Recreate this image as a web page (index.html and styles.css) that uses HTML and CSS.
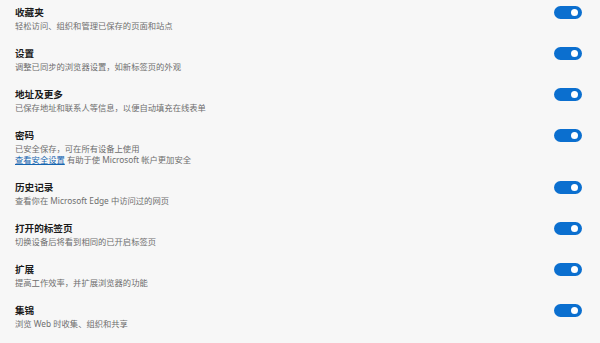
FILE: index.html
```html
<!DOCTYPE html>
<html lang="zh-CN">
<head>
<meta charset="utf-8">
<link rel="stylesheet" href="styles.css">
</head>
<body>
<div class="list">
  <div class="row">
    <div class="text">
      <div class="title">收藏夹</div>
      <div class="desc">轻松访问、组织和管理已保存的页面和站点</div>
    </div>
    <div class="toggle"><span class="knob"></span></div>
  </div>
  <div class="row">
    <div class="text">
      <div class="title">设置</div>
      <div class="desc">调整已同步的浏览器设置，如新标签页的外观</div>
    </div>
    <div class="toggle"><span class="knob"></span></div>
  </div>
  <div class="row">
    <div class="text">
      <div class="title">地址及更多</div>
      <div class="desc">已保存地址和联系人等信息，以便自动填充在线表单</div>
    </div>
    <div class="toggle"><span class="knob"></span></div>
  </div>
  <div class="row">
    <div class="text">
      <div class="title">密码</div>
      <div class="desc">已安全保存，可在所有设备上使用</div>
      <div class="desc"><a class="link" href="#">查看安全设置</a> 有助于使 Microsoft 帐户更加安全</div>
    </div>
    <div class="toggle"><span class="knob"></span></div>
  </div>
  <div class="row">
    <div class="text">
      <div class="title">历史记录</div>
      <div class="desc">查看你在 Microsoft Edge 中访问过的网页</div>
    </div>
    <div class="toggle"><span class="knob"></span></div>
  </div>
  <div class="row">
    <div class="text">
      <div class="title">打开的标签页</div>
      <div class="desc">切换设备后将看到相同的已开启标签页</div>
    </div>
    <div class="toggle"><span class="knob"></span></div>
  </div>
  <div class="row">
    <div class="text">
      <div class="title">扩展</div>
      <div class="desc">提高工作效率，并扩展浏览器的功能</div>
    </div>
    <div class="toggle"><span class="knob"></span></div>
  </div>
  <div class="row">
    <div class="text">
      <div class="title">集锦</div>
      <div class="desc">浏览 Web 时收集、组织和共享</div>
    </div>
    <div class="toggle"><span class="knob"></span></div>
  </div>
</div>
</body>
</html>
```
FILE: styles.css
```css
html, body {
  margin: 0;
  padding: 0;
  background: #f7f7f7;
  height: 100%;
  overflow: hidden;
}
body {
  font-family: "Noto Sans", "Noto Sans CJK SC", sans-serif;
}
.list {
  padding: 5px 18px 0 15px;
  display: flex;
  flex-direction: column;
}
.row {
  display: flex;
  justify-content: space-between;
  align-items: flex-start;
  padding-bottom: 15px;
}
.title {
  font-size: 9.6px;
  line-height: 15px;
  font-weight: 700;
  color: #1b1b1b;
}
.desc {
  font-size: 8.3px;
  line-height: 11px;
  color: #6e6e6e;
}
.link {
  color: #1565b0;
  text-decoration: underline;
  text-underline-offset: 1px;
}
.toggle {
  margin-top: 1px;
  width: 28px;
  height: 13px;
  border-radius: 7px;
  background: #0b6fcf;
  display: flex;
  align-items: center;
  justify-content: flex-end;
  padding-right: 4px;
  box-sizing: border-box;
}
.knob {
  width: 7px;
  height: 7px;
  border-radius: 50%;
  background: #ffffff;
}
```
